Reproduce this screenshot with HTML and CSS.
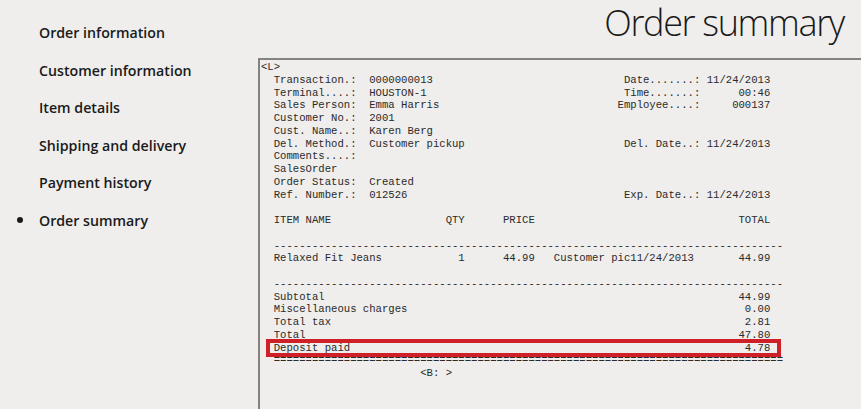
FILE: index.html
```html
<!DOCTYPE html>
<html lang="en">
<head>
<meta charset="utf-8">
<title>Order summary</title>
<link rel="stylesheet" href="styles.css">
</head>
<body>
<div class="page">
  <nav class="steps">
    <ul>
      <li>Order information</li>
      <li>Customer information</li>
      <li>Item details</li>
      <li>Shipping and delivery</li>
      <li>Payment history</li>
      <li class="active">Order summary</li>
    </ul>
  </nav>
  <main class="content">
    <h1 class="title">Order summary</h1>
    <div class="receipt">
<pre class="receipt-text">&lt;L&gt;
  Transaction.:  0000000013                              Date.......: 11/24/2013
  Terminal....:  HOUSTON-1                               Time.......:      00:46
  Sales Person:  Emma Harris                            Employee....:     000137
  Customer No.:  2001
  Cust. Name..:  Karen Berg
  Del. Method.:  Customer pickup                         Del. Date..: 11/24/2013
  Comments....:
  SalesOrder
  Order Status:  Created
  Ref. Number.:  012526                                  Exp. Date..: 11/24/2013

  ITEM NAME                  QTY      PRICE                                TOTAL

  --------------------------------------------------------------------------------
  Relaxed Fit Jeans            1      44.99   Customer pic11/24/2013       44.99

  --------------------------------------------------------------------------------
  Subtotal                                                                 44.99
  Miscellaneous charges                                                     0.00
  Total tax                                                                 2.81
  Total                                                                    47.80
  Deposit paid                                                              4.78
  ================================================================================
                         &lt;B: &gt;</pre>
      <div class="highlight"></div>
    </div>
  </main>
</div>
</body>
</html>
```
FILE: styles.css
```css
html, body {
  margin: 0;
  padding: 0;
  background: #efeeec;
}

.page {
  display: flex;
  width: 861px;
  height: 409px;
  overflow: hidden;
}

.steps {
  width: 258px;
  flex: none;
}

.steps ul {
  list-style: none;
  margin: 0;
  padding: 14px 0 0 39px;
}

.steps li {
  display: flex;
  align-items: center;
  height: 37.5px;
  font-family: "Open Sans", sans-serif;
  font-weight: 600;
  font-size: 14.2px;
  color: #1a1a1a;
}

.steps li.active::before {
  content: "";
  width: 6px;
  height: 6px;
  border-radius: 50%;
  background: #1a1a1a;
  margin-left: -22px;
  margin-right: 16px;
}

.content {
  flex: 1;
  display: flex;
  flex-direction: column;
  min-width: 0;
}

.title {
  margin: 0;
  height: 58px;
  box-sizing: border-box;
  padding: 0 17px 0 0;
  text-align: right;
  font-family: "Open Sans", sans-serif;
  font-weight: 300;
  font-size: 36px;
  line-height: 46px;
  letter-spacing: -1.35px;
  color: #1a1a1a;
}

.receipt {
  flex: 1;
  position: relative;
  border-top: 2px solid #858380;
  border-left: 2px solid #858380;
  padding: 1px 0 0 1px;
}

.receipt-text {
  margin: 0;
  font-family: "Liberation Mono", "Courier New", monospace;
  font-size: 10.625px;
  line-height: 12.75px;
  color: #2a2a2a;
}

.highlight {
  position: absolute;
  left: 6px;
  top: 279px;
  width: 515px;
  height: 18px;
  box-sizing: border-box;
  border: 4px solid #cf2027;
}
```
